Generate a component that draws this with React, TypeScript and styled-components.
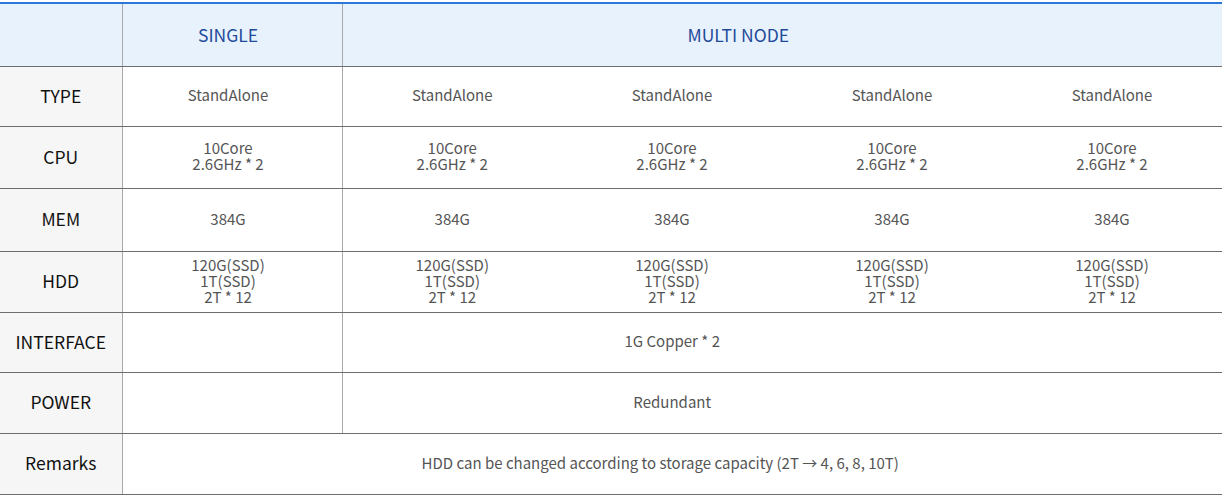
import styled, { createGlobalStyle } from "styled-components";

const GlobalStyle = createGlobalStyle`
  html, body {
    margin: 0;
    padding: 0;
    background: #fff;
  }
  body {
    font-family: "Noto Sans CJK KR", "Noto Sans", sans-serif;
  }
`;

const Wrap = styled.div`
  padding-top: 2px;
  width: 1222px;
`;

const Table = styled.table`
  width: 1222px;
  border-collapse: collapse;
  table-layout: fixed;
  border-top: 2px solid #2b78d8;
`;

const HeadCell = styled.th<{ $shift?: number }>`
  height: 60px;
  padding: 0 ${(p) => p.$shift ?? 0}px 2px 0;
  background: #e8f2fc;
  color: #1f4b9a;
  font-size: 17.5px;
  font-weight: 400;
  text-align: center;
  border-left: 1px solid #a9a9a9;
  border-bottom: 1px solid #6e6e6e;

  &:first-child {
    border-left: none;
  }
`;

const Label = styled.th<{ $h: number }>`
  height: ${(p) => p.$h - 3}px;
  padding: 0 0 3px;
  background: #f6f6f6;
  color: #111;
  font-size: 17.5px;
  font-weight: 400;
  text-align: center;
  border-bottom: 1px solid #6e6e6e;
`;

const Cell = styled.td<{ $split?: boolean; $shift?: number }>`
  padding: 0 ${(p) => p.$shift ?? 0}px 3px 0;
  color: #555;
  font-size: 15px;
  line-height: 16px;
  text-align: center;
  vertical-align: middle;
  border-bottom: 1px solid #6e6e6e;
  border-left: ${(p) => (p.$split ? "1px solid #a9a9a9" : "none")};
`;

type Row = { label: string; h: number; lines: string[] };

const rows: Row[] = [
  { label: "TYPE", h: 59, lines: ["StandAlone"] },
  { label: "CPU", h: 61, lines: ["10Core", "2.6GHz * 2"] },
  { label: "MEM", h: 62, lines: ["384G"] },
  { label: "HDD", h: 60, lines: ["120G(SSD)", "1T(SSD)", "2T * 12"] },
];

const Lines = ({ lines }: { lines: string[] }) => (
  <>
    {lines.map((l, i) => (
      <div key={i}>{l}</div>
    ))}
  </>
);

export default function App() {
  return (
    <>
      <GlobalStyle />
      <Wrap>
        <Table>
          <colgroup>
            <col style={{ width: 122 }} />
            <col style={{ width: 220 }} />
            <col style={{ width: 220 }} />
            <col style={{ width: 220 }} />
            <col style={{ width: 220 }} />
            <col style={{ width: 220 }} />
          </colgroup>
          <thead>
            <tr>
              <HeadCell />
              <HeadCell $shift={8}>SINGLE</HeadCell>
              <HeadCell colSpan={4} $shift={88}>
                MULTI NODE
              </HeadCell>
            </tr>
          </thead>
          <tbody>
            {rows.map((r) => (
              <tr key={r.label}>
                <Label $h={r.h}>{r.label}</Label>
                <Cell $split $shift={8}>
                  <Lines lines={r.lines} />
                </Cell>
                <Cell $split>
                  <Lines lines={r.lines} />
                </Cell>
                <Cell>
                  <Lines lines={r.lines} />
                </Cell>
                <Cell>
                  <Lines lines={r.lines} />
                </Cell>
                <Cell>
                  <Lines lines={r.lines} />
                </Cell>
              </tr>
            ))}
            <tr>
              <Label $h={59}>INTERFACE</Label>
              <Cell $split />
              <Cell $split colSpan={4} $shift={220}>
                1G Copper * 2
              </Cell>
            </tr>
            <tr>
              <Label $h={60}>POWER</Label>
              <Cell $split />
              <Cell $split colSpan={4} $shift={220}>
                Redundant
              </Cell>
            </tr>
            <tr>
              <Label $h={60}>Remarks</Label>
              <Cell $split colSpan={5} $shift={24}>
                HDD can be changed according to storage capacity (2T → 4, 6, 8, 10T)
              </Cell>
            </tr>
          </tbody>
        </Table>
      </Wrap>
    </>
  );
}
